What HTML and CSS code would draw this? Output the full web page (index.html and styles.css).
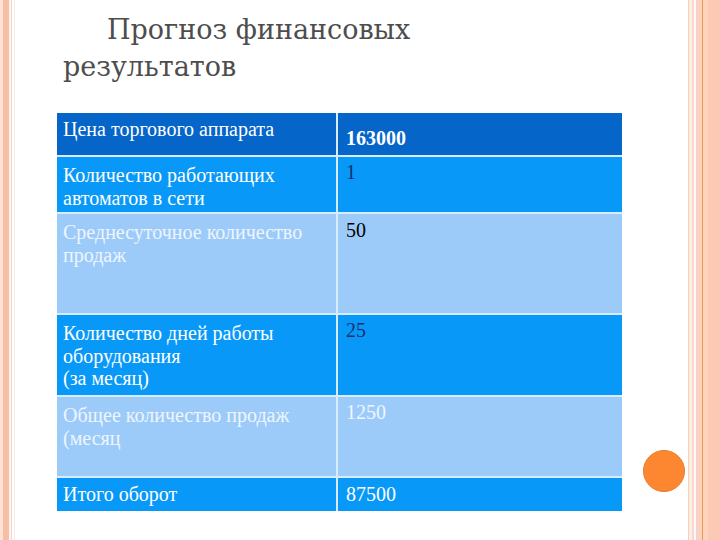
FILE: index.html
```html
<!DOCTYPE html>
<html lang="ru">
<head>
<meta charset="utf-8">
<title>Прогноз финансовых результатов</title>
<link rel="stylesheet" href="styles.css">
</head>
<body>
<div class="slide">
  <div class="content">
    <h1 class="title"><span class="indent">Прогноз финансовых</span><br>результатов</h1>
    <div class="table">
      <div class="cell r1 label">Цена торгового аппарата</div>
      <div class="cell r1 value big">163000</div>
      <div class="cell r2 label">Количество работающих<br>автоматов в сети</div>
      <div class="cell r2 value navy">1</div>
      <div class="cell r3 label">Среднесуточное количество<br>продаж</div>
      <div class="cell r3 value black">50</div>
      <div class="cell r4 label">Количество дней работы<br>оборудования<br>(за месяц)</div>
      <div class="cell r4 value navy">25</div>
      <div class="cell r5 label">Общее количество продаж<br>(месяц</div>
      <div class="cell r5 value">1250</div>
      <div class="cell r6 label">Итого оборот</div>
      <div class="cell r6 value">87500</div>
    </div>
  </div>
  <div class="dot"></div>
</div>
</body>
</html>
```
FILE: styles.css
```css
html, body {
  margin: 0;
  padding: 0;
}
body {
  width: 720px;
  height: 540px;
  overflow: hidden;
  font-family: "Liberation Serif", serif;
}
.slide {
  position: relative;
  width: 720px;
  height: 540px;
  background:
    linear-gradient(to right,
      #fde2d6 0px, #fde2d6 3px,
      #f8bea4 3px, #f8bea4 9px,
      #fff6ee 9px, #fff6ee 11px,
      #f3d3de 11px, #f3d3de 12px,
      #ffffff 12px, #ffffff 14px,
      #f9ecdf 14px, #f9ecdf 15px,
      #ffffff 15px, #ffffff 688px,
      #f9cdb9 688px, #f9cdb9 689px,
      #fcefe0 689px, #fcefe0 692px,
      #f6d6d8 692px, #f6d6d8 694px,
      #fffafa 694px, #fffafa 696px,
      #f8d0c6 696px, #f8d0c6 698px,
      #fdd2bd 698px, #fdd2bd 702px,
      #e59a5c 702px, #e59a5c 703px,
      #fdd3bd 703px, #fdd3bd 708px,
      #fcc9b4 708px, #fcc9b4 720px);
}
.content {
  padding: 11px 0 0 63px;
}
.title {
  margin: 0;
  font-family: "DejaVu Serif", serif;
  font-weight: normal;
  font-size: 27px;
  line-height: 37px;
  color: #4d4d4d;
}
.indent {
  padding-left: 44px;
}
.table {
  display: grid;
  grid-template-columns: 279px 284px;
  grid-template-rows: 42px 55px 99px 80px 79px 33px;
  gap: 2px;
  width: 565px;
  margin: 28px 0 0 -6px;
  background: #d8ecff;
}
.cell {
  font-family: "Liberation Serif", serif;
  font-size: 20px;
  line-height: 22.5px;
  color: #ffffff;
  box-sizing: border-box;
  white-space: nowrap;
}
.label {
  padding: 7px 6px 0 6px;
}
.value {
  padding: 4px 8px 0 8px;
}
.r1 { background: #0565c9; }
.r2, .r4, .r6 { background: #0899f8; }
.r3, .r5 { background: #9dcbf9; }
.r3.label, .r5.label, .r5.value { color: #eef5ff; }
.r1.label { padding-top: 5px; }
.r6.label, .r6.value { padding-top: 5px; }
.big {
  font-weight: bold;
  font-size: 20px;
  padding-top: 14px;
}
.black { padding-top: 5px; }
.navy { color: #1b2d72; }
.black { color: #000000; }
.dot {
  position: absolute;
  left: 643px;
  top: 450px;
  width: 42px;
  height: 42px;
  box-sizing: border-box;
  border-radius: 50%;
  background: #fd8731;
  border: 1px solid #e97b2c;
}
```
